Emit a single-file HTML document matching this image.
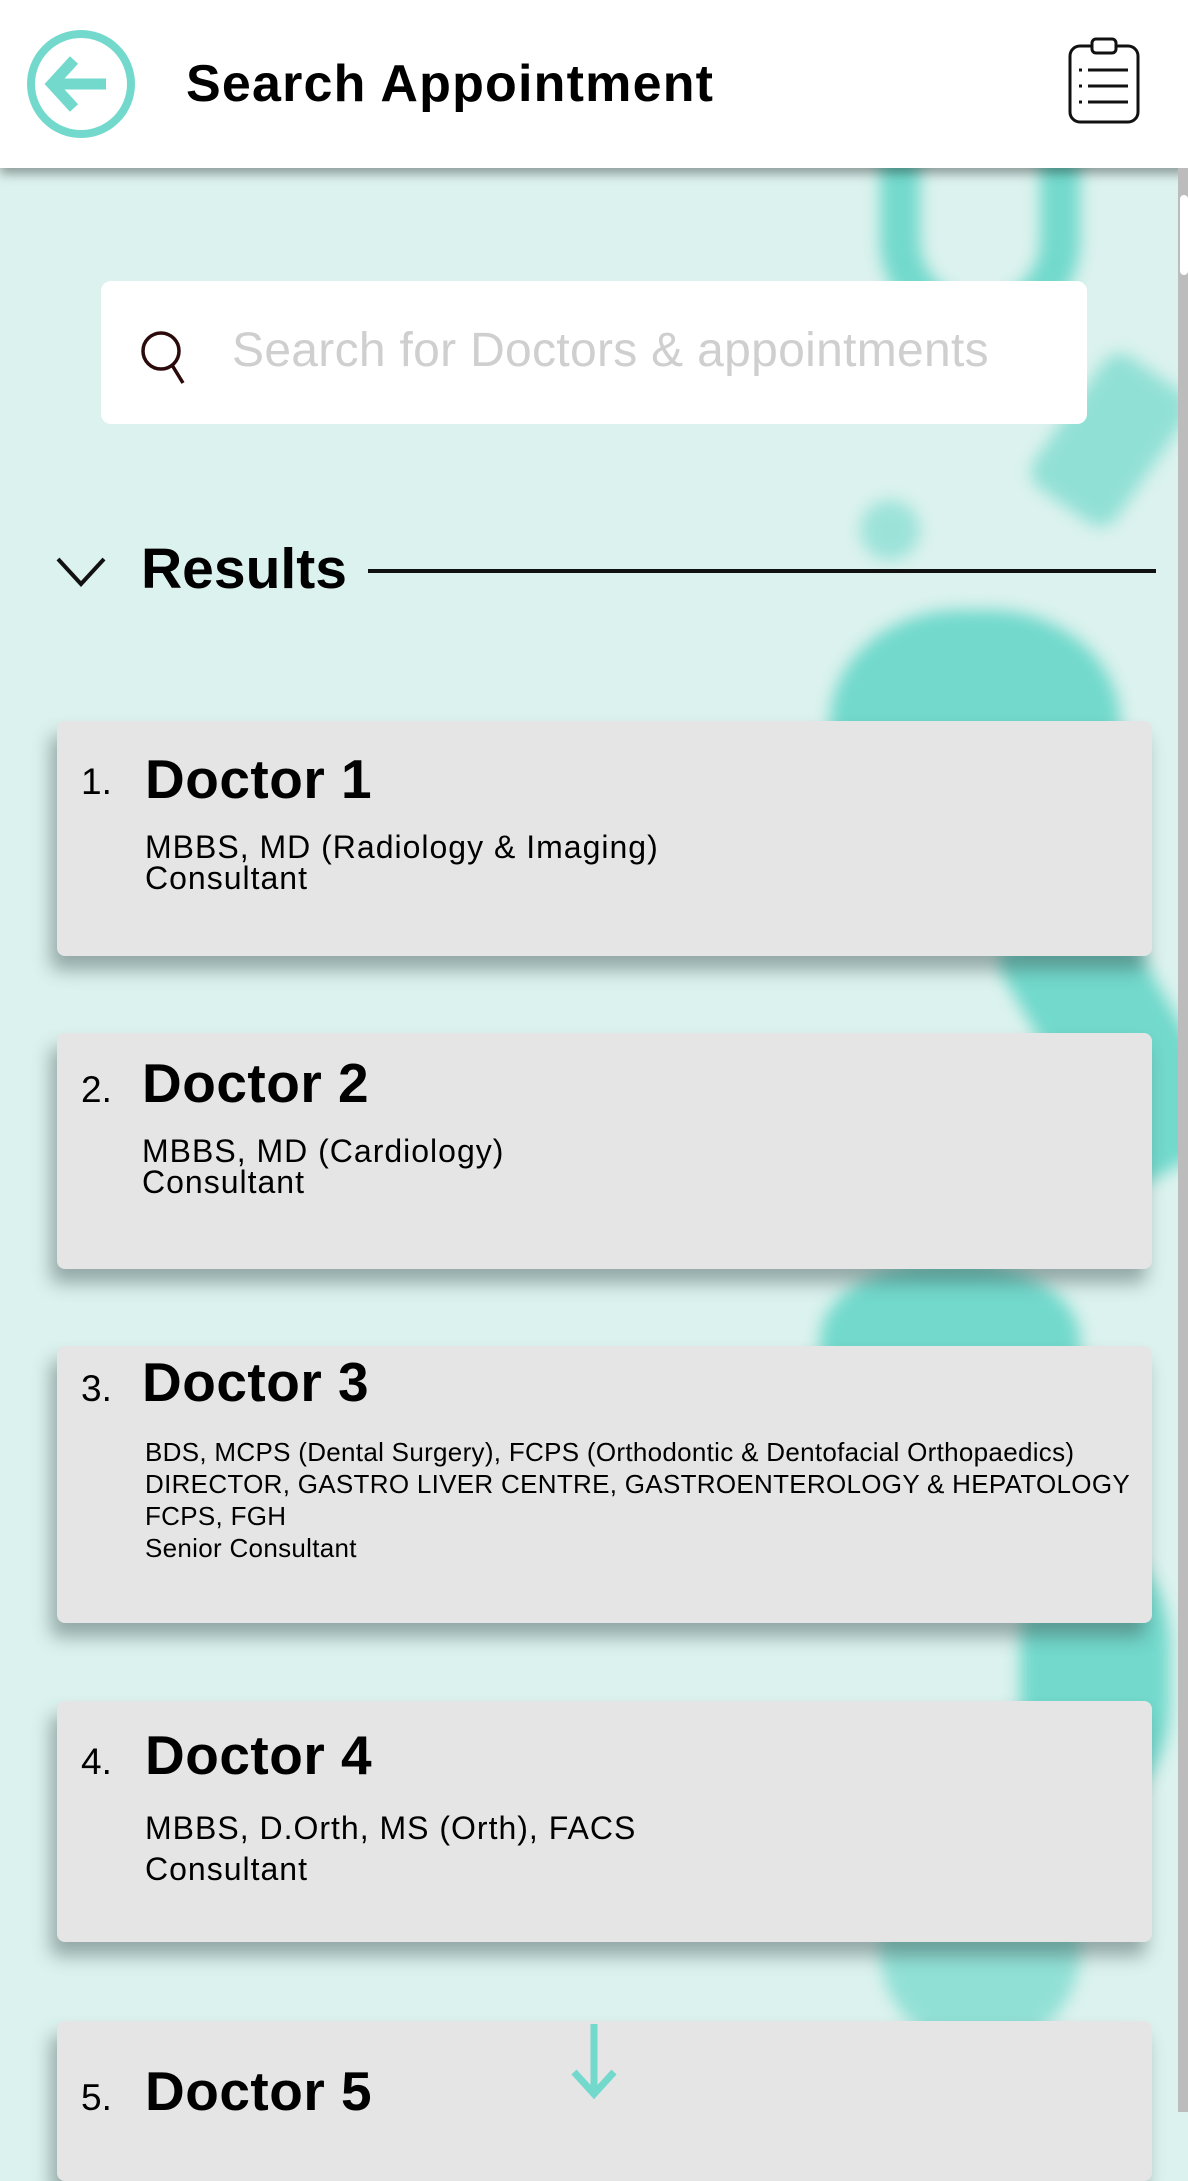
<!DOCTYPE html>
<html><head><meta charset="utf-8"><style>
*{margin:0;padding:0;box-sizing:border-box}
body{width:1188px;height:2112px;overflow:hidden;position:relative;font-family:"Liberation Sans",sans-serif;background:#dcf2ee;color:#000}
.abs{position:absolute}
.blob{position:absolute;background:#72d9cc;filter:blur(8px)}
.header{position:absolute;left:0;top:0;width:1188px;height:168px;background:#fff;box-shadow:0 6px 10px rgba(0,0,0,.35);z-index:5}
.card{position:absolute;left:57px;width:1095px;background:#e5e5e5;border-radius:8px;box-shadow:-6px 14px 18px rgba(60,80,80,.45);z-index:2}
.num{position:absolute;left:24px;font-size:37px}
.name{position:absolute;left:88px;font-size:55px;font-weight:bold;letter-spacing:0.5px}
.sub{position:absolute;left:88px;font-size:32px;line-height:31px;letter-spacing:1px}
</style></head><body>
<div class="blob" style="left:880px;top:150px;width:200px;height:190px;border-radius:0 0 100px 100px;border:40px solid #72d9cc;border-top:none;background:none"></div>
<div class="blob" style="left:1060px;top:360px;width:100px;height:160px;transform:rotate(35deg);border-radius:20px;opacity:.7"></div>
<div class="blob" style="left:860px;top:500px;width:60px;height:60px;border-radius:50%;opacity:.6"></div>
<div class="blob" style="left:830px;top:610px;width:290px;height:250px;border-radius:45%"></div>
<div class="blob" style="left:1050px;top:900px;width:130px;height:280px;transform:rotate(-30deg);border-radius:30px"></div>
<div class="blob" style="left:820px;top:1260px;width:260px;height:160px;border-radius:50% 50% 20px 20px"></div>
<div class="blob" style="left:1020px;top:1550px;width:150px;height:250px;border-radius:40%"></div>
<div class="blob" style="left:880px;top:1850px;width:200px;height:200px;border-radius:50%;opacity:.7"></div>
<div class="abs" style="left:1178px;top:168px;width:10px;height:1944px;background:#bcbcbc;z-index:6"></div>
<div class="abs" style="left:1180px;top:195px;width:8px;height:80px;background:#fff;border-radius:4px;z-index:7"></div>

<div class="header">
  <svg class="abs" style="left:26px;top:30px" width="110" height="110" viewBox="0 0 110 110">
    <circle cx="55" cy="54" r="50" fill="none" stroke="#72d9cc" stroke-width="8"/>
    <path d="M28 54 H80" stroke="#72d9cc" stroke-width="11" fill="none"/>
    <path d="M48 30 L26 54 L48 78" stroke="#72d9cc" stroke-width="11" fill="none"/>
  </svg>
  <div class="abs" style="left:186px;top:54px;font-size:52px;font-weight:bold;letter-spacing:1.2px">Search Appointment</div>
  <svg class="abs" style="left:1066px;top:36px" width="76" height="90" viewBox="0 0 76 90">
    <rect x="4" y="10" width="68" height="76" rx="10" fill="none" stroke="#111" stroke-width="3"/>
    <rect x="26" y="3" width="24" height="14" rx="4" fill="#fff" stroke="#111" stroke-width="3"/>
    <path d="M22 34H62M22 50H62M22 66H62" stroke="#111" stroke-width="3"/>
    <path d="M13 34h3M13 50h3M13 66h3" stroke="#111" stroke-width="3"/>
  </svg>
</div>

<div class="abs" style="left:101px;top:281px;width:986px;height:143px;background:#fff;border-radius:10px;z-index:2">
  <svg class="abs" style="left:38px;top:48px" width="52" height="56" viewBox="0 0 52 56">
    <circle cx="22" cy="22" r="18" fill="none" stroke="#2a0a0a" stroke-width="3.5"/>
    <path d="M33 36 L44 54" stroke="#2a0a0a" stroke-width="3.5"/>
  </svg>
  <div class="abs" style="left:131px;top:42px;font-size:48px;letter-spacing:0.3px;color:#cfcfcf">Search for Doctors &amp; appointments</div>
</div>

<svg class="abs" style="left:55px;top:556px" width="52" height="32" viewBox="0 0 52 32"><path d="M3 3 L26 28 L49 3" fill="none" stroke="#111" stroke-width="4"/></svg>
<div class="abs" style="left:141px;top:536px;font-size:57px;font-weight:bold">Results</div>
<div class="abs" style="left:368px;top:569px;width:788px;height:4px;background:#111"></div>

<div class="card" style="top:721px;height:235px">
  <div class="num" style="top:40px">1.</div>
  <div class="name" style="top:26px">Doctor 1</div>
  <div class="sub" style="top:111px">MBBS, MD (Radiology &amp; Imaging)<br>Consultant</div>
</div>
<div class="card" style="top:1033px;height:236px">
  <div class="num" style="top:36px">2.</div>
  <div class="name" style="top:18px;left:85px">Doctor 2</div>
  <div class="sub" style="top:103px;left:85px">MBBS, MD (Cardiology)<br>Consultant</div>
</div>
<div class="card" style="top:1346px;height:277px">
  <div class="num" style="top:22px">3.</div>
  <div class="name" style="top:4px;left:85px">Doctor 3</div>
  <div class="sub" style="top:90px;font-size:26px;line-height:32px;letter-spacing:0.3px">BDS, MCPS (Dental Surgery), FCPS (Orthodontic &amp; Dentofacial Orthopaedics)<br>DIRECTOR, GASTRO LIVER CENTRE, GASTROENTEROLOGY &amp; HEPATOLOGY<br>FCPS, FGH<br>Senior Consultant</div>
</div>
<div class="card" style="top:1701px;height:241px">
  <div class="num" style="top:40px">4.</div>
  <div class="name" style="top:22px">Doctor 4</div>
  <div class="sub" style="top:107px;line-height:41px">MBBS, D.Orth, MS (Orth), FACS<br>Consultant</div>
</div>
<div class="card" style="top:2021px;height:160px">
  <div class="num" style="top:56px">5.</div>
  <div class="name" style="top:38px">Doctor 5</div>
</div>
<svg class="abs" style="left:566px;top:2022px;z-index:4" width="56" height="80" viewBox="0 0 56 80"><path d="M28 2 V72 M8 50 L28 72 L48 50" fill="none" stroke="#72d9cc" stroke-width="7"/></svg>
</body></html>
